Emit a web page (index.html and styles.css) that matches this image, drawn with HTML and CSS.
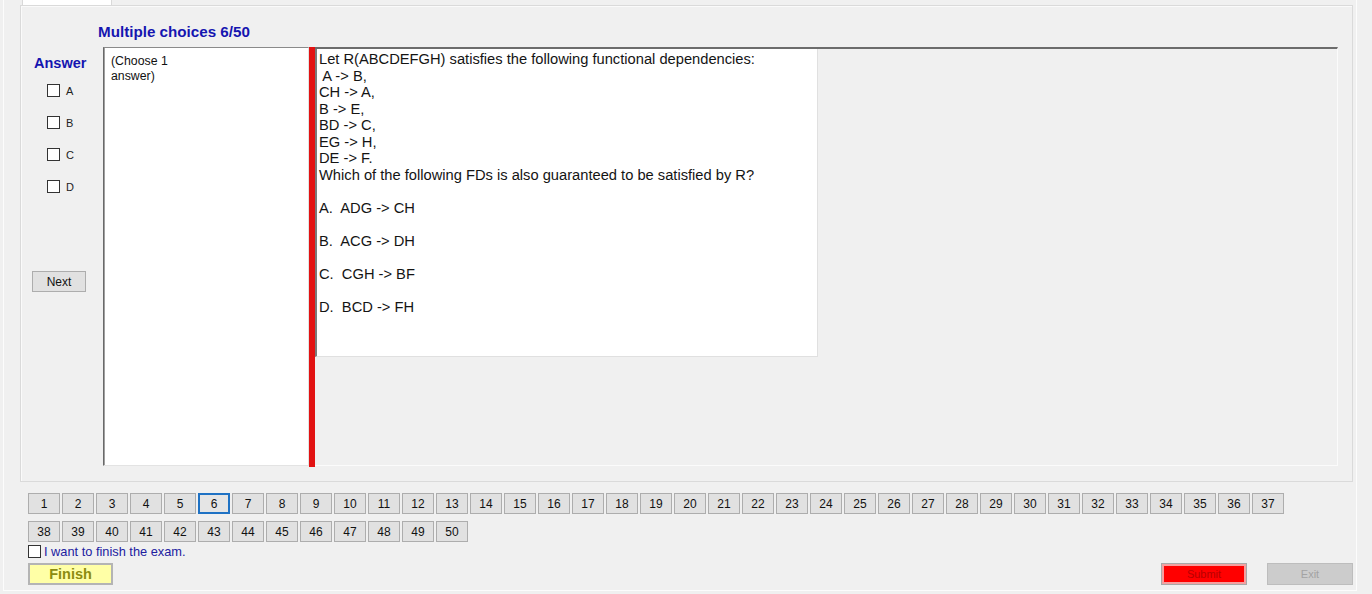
FILE: index.html
```html
<!DOCTYPE html>
<html>
<head>
<meta charset="utf-8">
<title>Exam</title>
<link rel="stylesheet" href="styles.css">
</head>
<body>
<div class="frame">
  <div class="tabstrip"><div class="tab"></div></div>
  <div class="tabpage">
    <div class="title">Multiple choices 6/50</div>
    <div class="main">
      <div class="answer-col">
        <div class="answer-label">Answer</div>
        <div class="options">
          <label class="opt"><span class="cb"></span><span class="opt-text">A</span></label>
          <label class="opt"><span class="cb"></span><span class="opt-text">B</span></label>
          <label class="opt"><span class="cb"></span><span class="opt-text">C</span></label>
          <label class="opt"><span class="cb"></span><span class="opt-text">D</span></label>
        </div>
        <div class="btn next">Next</div>
      </div>
      <div class="choose-box">(Choose 1<br>answer)</div>
      <div class="redbar"></div>
      <div class="qpanel">
        <div class="qbox">Let R(ABCDEFGH) satisfies the following functional dependencies:
 A -&gt; B,
CH -&gt; A,
B -&gt; E,
BD -&gt; C,
EG -&gt; H,
DE -&gt; F.
Which of the following FDs is also guaranteed to be satisfied by R?

A.  ADG -&gt; CH

B.  ACG -&gt; DH

C.  CGH -&gt; BF

D.  BCD -&gt; FH</div>
      </div>
    </div>
  </div>
  <div class="bottom">
    <div class="nav">
      <div class="btn num">1</div><div class="btn num">2</div><div class="btn num">3</div><div class="btn num">4</div><div class="btn num">5</div><div class="btn num current">6</div><div class="btn num">7</div><div class="btn num">8</div><div class="btn num">9</div><div class="btn num">10</div>
      <div class="btn num">11</div><div class="btn num">12</div><div class="btn num">13</div><div class="btn num">14</div><div class="btn num">15</div><div class="btn num">16</div><div class="btn num">17</div><div class="btn num">18</div><div class="btn num">19</div><div class="btn num">20</div>
      <div class="btn num">21</div><div class="btn num">22</div><div class="btn num">23</div><div class="btn num">24</div><div class="btn num">25</div><div class="btn num">26</div><div class="btn num">27</div><div class="btn num">28</div><div class="btn num">29</div><div class="btn num">30</div>
      <div class="btn num">31</div><div class="btn num">32</div><div class="btn num">33</div><div class="btn num">34</div><div class="btn num">35</div><div class="btn num">36</div><div class="btn num">37</div><div class="btn num">38</div><div class="btn num">39</div><div class="btn num">40</div>
      <div class="btn num">41</div><div class="btn num">42</div><div class="btn num">43</div><div class="btn num">44</div><div class="btn num">45</div><div class="btn num">46</div><div class="btn num">47</div><div class="btn num">48</div><div class="btn num">49</div><div class="btn num">50</div>
    </div>
    <label class="finish-check"><span class="cb"></span><span class="finish-text">I want to finish the exam.</span></label>
    <div class="actions">
      <div class="btn finish">Finish</div>
      <div class="right-actions">
        <div class="btn submit">Submit</div>
        <div class="btn exit">Exit</div>
      </div>
    </div>
  </div>
</div>
</body>
</html>
```
FILE: styles.css
```css
html, body {
  margin: 0;
  padding: 0;
}
body {
  background: #f0f0f0;
  font-family: "Liberation Sans", Arial, sans-serif;
  width: 1372px;
  height: 594px;
  overflow: hidden;
  color: #000;
}
.frame {
  margin-left: 3px;
  width: 1354px;
  height: 591px;
  box-sizing: border-box;
  border-left: 1px solid #fcfcfc;
  border-right: 1px solid #fcfcfc;
  border-bottom: 1px solid #fcfcfc;
  padding-left: 16px;
}
.tabstrip {
  height: 5px;
  display: flex;
}
.tab {
  margin-left: 2px;
  width: 88px;
  height: 5px;
  background: #ffffff;
  border-left: 1px solid #d9d9d9;
  border-right: 1px solid #d9d9d9;
}
.tabpage {
  width: 1333px;
  height: 477px;
  box-sizing: border-box;
  border: 1px solid #dadada;
  box-shadow: inset 1px 1px 0 #fafafa;
  background: #f0f0f0;
}
.title {
  height: 41px;
  box-sizing: border-box;
  padding-top: 17px;
  padding-left: 77px;
  font-size: 15.2px;
  line-height: 18px;
  font-weight: bold;
  color: #1515b0;
}
.main {
  display: flex;
  height: 420px;
}
.answer-col {
  width: 82px;
  display: flex;
  flex-direction: column;
}
.answer-label {
  margin-top: 8px;
  padding-left: 13px;
  font-size: 14.5px;
  line-height: 16px;
  font-weight: bold;
  color: #1515b0;
}
.options {
  margin-top: 13px;
  display: flex;
  flex-direction: column;
  gap: 19px;
  padding-left: 26px;
}
.opt {
  display: flex;
  align-items: center;
  height: 13px;
}
.cb {
  display: inline-block;
  width: 13px;
  height: 13px;
  box-sizing: border-box;
  border: 1px solid #333333;
  background: #ffffff;
  flex: none;
}
.opt-text {
  margin-left: 6px;
  font-size: 11px;
  color: #222;
}
.btn {
  display: flex;
  align-items: center;
  justify-content: center;
  box-sizing: border-box;
  background: #e1e1e1;
  border: 1px solid #adadad;
  font-size: 12px;
  color: #111;
}
.next {
  margin-top: 78px;
  margin-left: 11px;
  width: 54px;
  height: 21px;
}
.choose-box {
  width: 206px;
  height: 419px;
  box-sizing: border-box;
  background: #ffffff;
  border-left: 1px solid #696969;
  border-top: 1px solid #8a8a8a;
  border-right: 1px solid #e3e3e3;
  border-bottom: 1px solid #e3e3e3;
  box-shadow: inset 1px 0 0 #a0a0a0;
  padding: 6px 7px;
  font-size: 12.3px;
  line-height: 15px;
  color: #111;
}
.redbar {
  width: 6px;
  height: 420px;
  background: #e21212;
}
.qpanel {
  width: 1023px;
  height: 419px;
  box-sizing: border-box;
  border-top: 2px solid #6c6c6c;
  border-right: 1px solid #fbfbfb;
  border-bottom: 1px solid #fbfbfb;
  background: #f0f0f0;
}
.qbox {
  width: 503px;
  height: 308px;
  box-sizing: border-box;
  background: #ffffff;
  border-left: 2px solid #7a7a7a;
  border-right: 1px solid #e0e0e0;
  border-bottom: 1px solid #e0e0e0;
  padding: 2px 0 0 2px;
  white-space: pre;
  font-size: 14.7px;
  line-height: 16.5px;
  color: #141414;
}
.bottom {
  padding-top: 11px;
  padding-left: 8px;
}
.nav {
  width: 1258px;
  display: flex;
  flex-wrap: wrap;
  column-gap: 2px;
  row-gap: 7px;
}
.num {
  width: 32px;
  height: 21px;
}
.num.current {
  border: 2px solid #1f72c4;
  background: #e5e5e5;
}
.finish-check {
  display: flex;
  align-items: center;
  margin-top: 2px;
  height: 15px;
}
.finish-text {
  margin-left: 3px;
  font-size: 12.8px;
  color: #2020a0;
}
.actions {
  margin-top: 4px;
  width: 1325px;
  display: flex;
  justify-content: space-between;
}
.finish {
  width: 85px;
  height: 22px;
  background: #ffffa6;
  border: 2px solid #b4b4b4;
  font-size: 14.5px;
  font-weight: bold;
  color: #8c8c10;
}
.right-actions {
  display: flex;
  gap: 20px;
}
.submit {
  width: 86px;
  height: 22px;
  background: #ff0000;
  border: 1px solid #a8a8a8;
  box-shadow: inset 0 0 0 2px #f4a0a0;
  font-size: 11px;
  color: #b80000;
}
.exit {
  width: 86px;
  height: 22px;
  background: #cccccc;
  border: 1px solid #bdbdbd;
  font-size: 11px;
  color: #a3a3a3;
}
```
